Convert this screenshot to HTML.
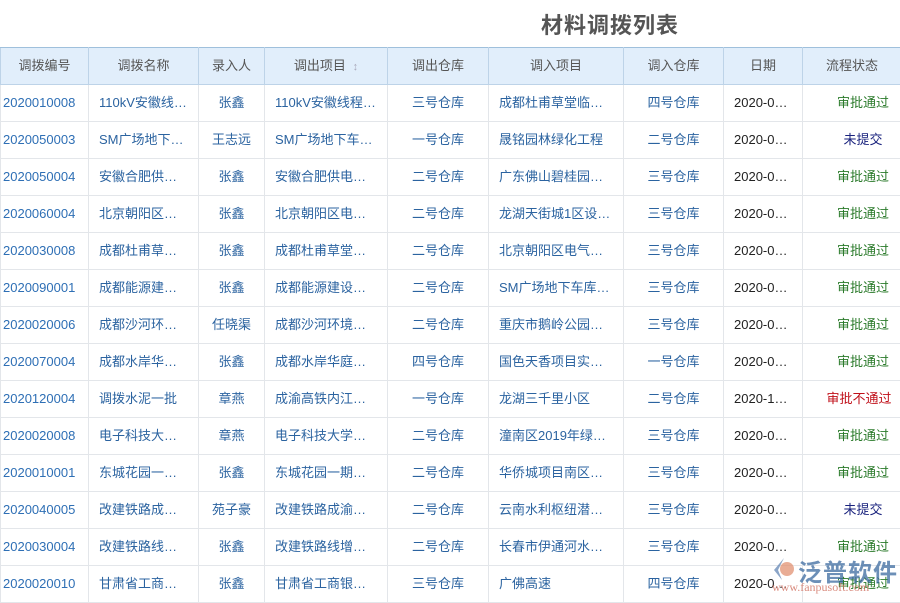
<!DOCTYPE html>
<html><head><meta charset="utf-8"><style>
body{margin:0;width:900px;height:600px;overflow:hidden;background:#fff;font-family:"Liberation Sans","Noto Sans CJK SC",sans-serif;}
.title{position:absolute;left:0;top:8px;width:900px;text-align:center;padding-left:320px;box-sizing:border-box;font-size:22px;font-weight:bold;color:#555;letter-spacing:1px}
table{position:absolute;left:0;top:47px;border-collapse:collapse;table-layout:fixed;width:901px;font-size:13px}
th{height:36px;padding:0;background:#e1eefb;color:#555;font-weight:normal;border:1px solid #bdd3e8;border-top:1px solid #9fc0dc;line-height:16px}
td{height:36px;border:1px solid #e3e6ea;white-space:nowrap;overflow:hidden;color:#2b63a0;padding:0;line-height:16px}
tr{height:37px}
td.c{text-align:center}td.l{padding-left:10px}td.id{padding-left:2px;color:#2e6fb5}
td.d{color:#222;padding-left:10px}td.s{text-align:center;padding-left:22px;color:#2a7a2a}
td.u{color:#1a237e}td.r{color:#c0101a;padding-left:14px}
.logo{position:absolute;left:770px;top:553px;font-size:24px;color:#3b6aa0;font-weight:bold;opacity:.75;letter-spacing:1px}
.url{position:absolute;left:772px;top:580px;font-size:12px;color:#d07060;font-family:"Liberation Serif",serif;opacity:.8}
</style></head><body>
<div class="title">材料调拨列表</div>
<table>
<colgroup><col style="width:88px"><col style="width:110px"><col style="width:66px"><col style="width:123px"><col style="width:101px"><col style="width:135px"><col style="width:100px"><col style="width:79px"><col style="width:99px"></colgroup>
<tr><th>调拨编号</th><th>调拨名称</th><th>录入人</th><th>调出项目 <span style="color:#aab;font-size:11px">&nbsp;↕</span></th><th>调出仓库</th><th>调入项目</th><th>调入仓库</th><th>日期</th><th>流程状态</th></tr>
<tr><td class="id">2020010008</td><td class="l">110kV安徽线…</td><td class="c">张鑫</td><td class="l">110kV安徽线程…</td><td class="c">三号仓库</td><td class="l">成都杜甫草堂临…</td><td class="c">四号仓库</td><td class="d">2020-0…</td><td class="s">审批通过</td></tr>
<tr><td class="id">2020050003</td><td class="l">SM广场地下…</td><td class="c">王志远</td><td class="l">SM广场地下车…</td><td class="c">一号仓库</td><td class="l">晟铭园林绿化工程</td><td class="c">二号仓库</td><td class="d">2020-0…</td><td class="s u">未提交</td></tr>
<tr><td class="id">2020050004</td><td class="l">安徽合肥供…</td><td class="c">张鑫</td><td class="l">安徽合肥供电…</td><td class="c">二号仓库</td><td class="l">广东佛山碧桂园…</td><td class="c">三号仓库</td><td class="d">2020-0…</td><td class="s">审批通过</td></tr>
<tr><td class="id">2020060004</td><td class="l">北京朝阳区…</td><td class="c">张鑫</td><td class="l">北京朝阳区电…</td><td class="c">二号仓库</td><td class="l">龙湖天街城1区设…</td><td class="c">三号仓库</td><td class="d">2020-0…</td><td class="s">审批通过</td></tr>
<tr><td class="id">2020030008</td><td class="l">成都杜甫草…</td><td class="c">张鑫</td><td class="l">成都杜甫草堂…</td><td class="c">二号仓库</td><td class="l">北京朝阳区电气…</td><td class="c">三号仓库</td><td class="d">2020-0…</td><td class="s">审批通过</td></tr>
<tr><td class="id">2020090001</td><td class="l">成都能源建…</td><td class="c">张鑫</td><td class="l">成都能源建设…</td><td class="c">二号仓库</td><td class="l">SM广场地下车库…</td><td class="c">三号仓库</td><td class="d">2020-0…</td><td class="s">审批通过</td></tr>
<tr><td class="id">2020020006</td><td class="l">成都沙河环…</td><td class="c">任晓渠</td><td class="l">成都沙河环境…</td><td class="c">二号仓库</td><td class="l">重庆市鹅岭公园…</td><td class="c">三号仓库</td><td class="d">2020-0…</td><td class="s">审批通过</td></tr>
<tr><td class="id">2020070004</td><td class="l">成都水岸华…</td><td class="c">张鑫</td><td class="l">成都水岸华庭…</td><td class="c">四号仓库</td><td class="l">国色天香项目实…</td><td class="c">一号仓库</td><td class="d">2020-0…</td><td class="s">审批通过</td></tr>
<tr><td class="id">2020120004</td><td class="l">调拨水泥一批</td><td class="c">章燕</td><td class="l">成渝高铁内江…</td><td class="c">一号仓库</td><td class="l">龙湖三千里小区</td><td class="c">二号仓库</td><td class="d">2020-1…</td><td class="s r">审批不通过</td></tr>
<tr><td class="id">2020020008</td><td class="l">电子科技大…</td><td class="c">章燕</td><td class="l">电子科技大学…</td><td class="c">二号仓库</td><td class="l">潼南区2019年绿…</td><td class="c">三号仓库</td><td class="d">2020-0…</td><td class="s">审批通过</td></tr>
<tr><td class="id">2020010001</td><td class="l">东城花园一…</td><td class="c">张鑫</td><td class="l">东城花园一期…</td><td class="c">二号仓库</td><td class="l">华侨城项目南区…</td><td class="c">三号仓库</td><td class="d">2020-0…</td><td class="s">审批通过</td></tr>
<tr><td class="id">2020040005</td><td class="l">改建铁路成…</td><td class="c">苑子豪</td><td class="l">改建铁路成渝…</td><td class="c">二号仓库</td><td class="l">云南水利枢纽潜…</td><td class="c">三号仓库</td><td class="d">2020-0…</td><td class="s u">未提交</td></tr>
<tr><td class="id">2020030004</td><td class="l">改建铁路线…</td><td class="c">张鑫</td><td class="l">改建铁路线增…</td><td class="c">二号仓库</td><td class="l">长春市伊通河水…</td><td class="c">三号仓库</td><td class="d">2020-0…</td><td class="s">审批通过</td></tr>
<tr><td class="id">2020020010</td><td class="l">甘肃省工商…</td><td class="c">张鑫</td><td class="l">甘肃省工商银…</td><td class="c">三号仓库</td><td class="l">广佛高速</td><td class="c">四号仓库</td><td class="d">2020-0…</td><td class="s">审批通过</td></tr>
</table>
<svg style="position:absolute;left:770px;top:556px" width="26" height="26"><path d="M14 2 L4 14 L12 24 L8 14 Z" fill="#5a7fb0" opacity=".7"/><circle cx="17" cy="13" r="7" fill="#e08a6a" opacity=".7"/></svg>
<div class="logo" style="left:798px">泛普软件</div>
<div class="url">www.fanpusoft.com</div>
</body></html>
